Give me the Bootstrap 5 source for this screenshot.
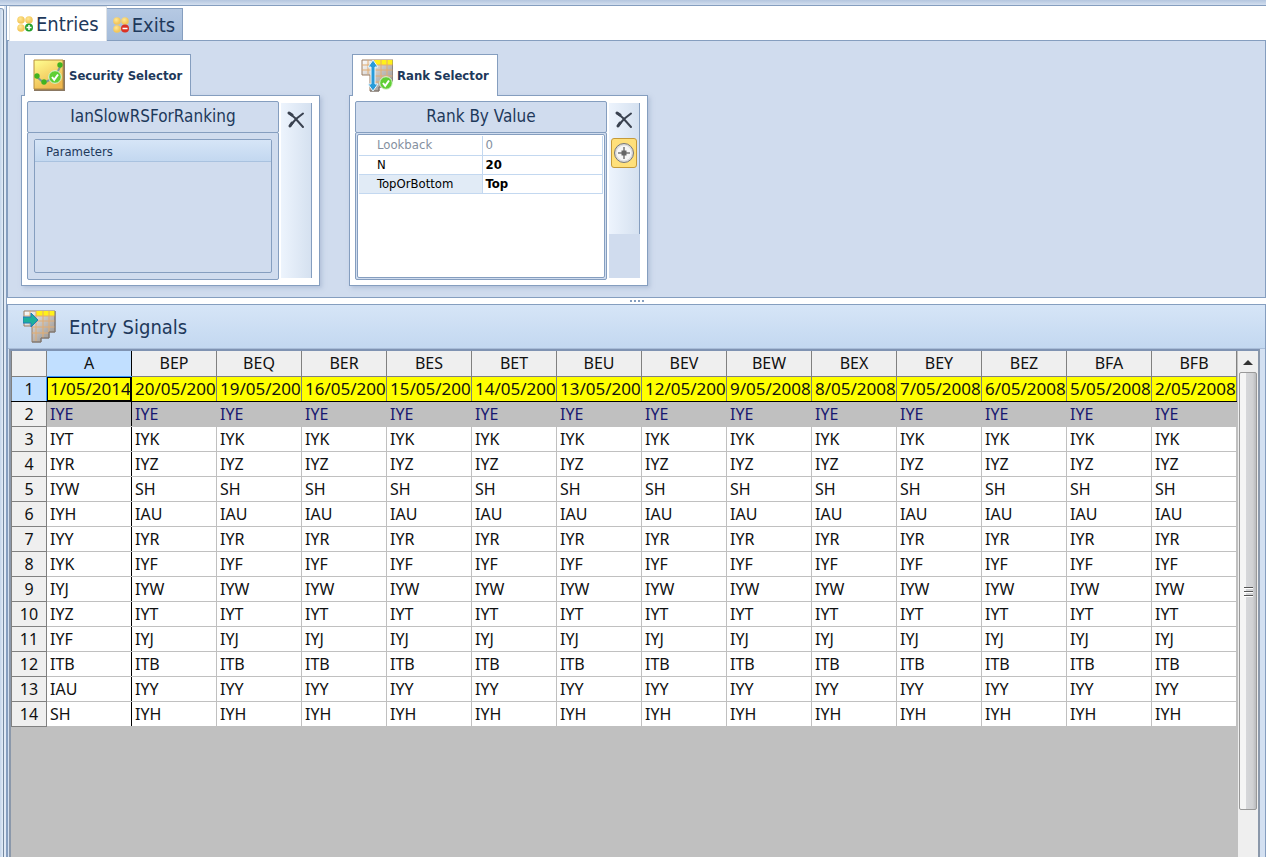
<!DOCTYPE html>
<html lang="en">
<head>
<meta charset="utf-8">
<meta name="viewport" content="width=device-width, initial-scale=1">
<title>Entry Signals</title>
<link href="https://cdn.jsdelivr.net/npm/bootstrap@5.3.0/dist/css/bootstrap.min.css" rel="stylesheet">
<style>
:root{--line:#859ebf;--panel:#d0dcee;--ink:#1e395b}
body{font-family:"DejaVu Sans Condensed","DejaVu Sans",sans-serif;font-stretch:condensed;color:var(--ink);font-size:13px;line-height:16px}
.top-strip{height:6px;background:linear-gradient(#b4c6df,#d3dfef);border-bottom:1px solid var(--line)}
.side-strip{width:4px;margin-top:2px;background:linear-gradient(90deg,#c3d4e9,#e3edf8);border-top:1px solid var(--line);border-right:1px solid #74889f;border-top-right-radius:3px}
.side-gap{width:3px;background:#e0e9f5;border-right:1px solid var(--line)}
.mode-tabs{height:34px;padding-left:2px;border-bottom:0}
.mode-tabs .nav-link{font-size:20px;line-height:24px;color:var(--ink);border:1px solid var(--line);border-bottom:0;border-radius:0;margin:0;padding:0 7px;gap:2px}
.mode-tabs .nav-link.active{background:#fff;height:35px;color:var(--ink);position:relative;z-index:1;margin-bottom:-1px}
.mode-tabs .exits-tab{background:linear-gradient(#b5c9e3,#a5bcda);height:32px;border-left:0;padding:0 7px 0 6px}
.selectors{background:var(--panel);border:1px solid var(--line);height:258px;padding:13px 13px 0}
.sel-block{width:299px;margin-right:29px}
.sel-tab{height:42px;margin-left:3px;padding:0 8px;background:#fff;border:1px solid var(--line);border-bottom:0;font-size:13px;font-weight:bold;position:relative;z-index:1;margin-bottom:-1px}
.sel-box{height:191px;background:#fff;border:1px solid var(--line);box-shadow:2px 2px 4px #93a6c480;padding:5px 7px 5px 5px}
.frame-line{border:1px solid var(--line);border-radius:2px}
.rule-col{width:252px}
.rule-title{height:32px;background:var(--panel);font-size:17px;line-height:29px}
.rule-body{background:var(--panel);padding:6px;margin-top:-1px}
.group-title{height:22px;background:linear-gradient(#d6e5f7,#c3d8f0);border-bottom:1px solid #a9c2df;padding:0 11px;line-height:23px}
.tool-col{width:31px;margin:2px 0;background:var(--panel)}
.tool-rail{background:linear-gradient(90deg,#edf4fd,#d5e1f0);border-right:1px solid var(--line);padding:5px 2px}
.tool-btn{width:26px;height:24px;line-height:0;background:none;border:0}
.target-btn{height:30px;background:#ffe07a;border:1px solid #c59a3a;border-radius:3px;margin-top:6px}
.props{background:#fff;padding:1px;margin:1px}
.prop-table{border-collapse:collapse;table-layout:fixed;width:100%;color:#000;line-height:16px}
.prop-table td,.prop-table th{border:1px solid #c3d8f0;height:19px;padding:0 3px;font-weight:400;border-top:0}
.prop-table th{padding-left:18px;width:123px;border-left:0}
.prop-table td{font-weight:bold}
.prop-table .dim>*{color:#8490a0;font-weight:400}
.prop-table .chosen th{background:#e1ebf6}
.splitter{height:6px;background:#fff;gap:2px}
.grip{width:2px;height:2px;background:var(--line)}
.signals{border:1px solid var(--line);border-bottom:0;background:#d3e0f1}
.signals-title{height:44px;font-size:20px;line-height:24px;background:linear-gradient(#d6e5f7,#c3d8f0);border-bottom:1px solid #a9bdd8;padding-left:15px}
.sheet-frame{margin:0 5px 0 1px;border:2px solid #8b98aa;border-top-color:#7f93b2;border-bottom:0;background:silver}
.sheet{table-layout:fixed;width:1226px;border-collapse:collapse;font-family:"Noto Sans","Open Sans",sans-serif;font-stretch:normal;font-size:16px;line-height:20px;color:#111}
.sheet th,.sheet td{height:25px;padding:0 0 0 3px;border:1px solid silver;border-top:0;overflow:hidden;white-space:nowrap;font-weight:400}
.sheet td{background:#fff}
.sheet th{background:#efefef;border-color:gray;text-align:center;padding:0}
.sheet .dates td{background:#ff0;border-color:gray;border-bottom-color:#000;font-size:17px}
.sheet .dates th{border-bottom-color:#000}
.sheet .sector td{background:silver;color:#191970}
.sheet tr>*:nth-child(2){border-right-color:#000}
.sheet tr>td:nth-child(3){border-left-color:#000}
.sheet .pick{background:#c1dfff;border-right-color:#3399ff;border-bottom-color:#3399ff}
.sheet .dates .cursor-cell{border-color:#000;box-shadow:inset 0 0 0 1px #000}
.bar{width:20px;background:#efefef;padding:0 1px}
.bar button{height:21px;line-height:0;background:none;border:0}
.thumb{height:438px;border:1px solid #999;border-radius:2px;background:linear-gradient(90deg,#f5f5f5 35%,#d6d7da 40%,#d0d1d3 80%,#b9babd)}
</style>
<script src="https://cdn.jsdelivr.net/npm/bootstrap@5.3.0/dist/js/bootstrap.bundle.min.js"></script>
</head>
<body class="vh-100 d-flex flex-column overflow-hidden">
<svg width="0" height="0" class="position-absolute" aria-hidden="true">
  <defs>
    <radialGradient id="gold" cx=".4" cy=".35"><stop offset="0" stop-color="#ffe894"/><stop offset="1" stop-color="#f3c75c"/></radialGradient>
    <linearGradient id="tile" x2=".5" y2="1"><stop offset="0" stop-color="#ffff91"/><stop offset="1" stop-color="#efb84f"/></linearGradient>
    <linearGradient id="steel" x2="1" y2="1"><stop offset="0" stop-color="#fff"/><stop offset=".5" stop-color="#c4c0bd"/><stop offset="1" stop-color="#8f8b88"/></linearGradient>
    <g id="coins" fill="url(#gold)"><circle cx="4" cy="4" r="3.800"/><circle cx="12" cy="4" r="3.800"/><circle cx="4" cy="12" r="3.800"/></g>
    <g id="tick"><circle cx="0" cy="0" r="6.300" fill="#60cf35" stroke="#dff5d5"/><path d="M-3 0l2.200 2.800L3-2.500" fill="none" stroke="#fff" stroke-width="2"/></g>
    <g id="sheet-icon"><path d="M1 1h31v21h-6v6h-8v4H9v-16H1z" fill="url(#steel)" stroke="#9b7d62"/><path d="M13 1h19v5H13z" fill="#fff11a"/><path d="M1 6h31M1 11h31M9 17h23M9 23h17M7 1v14M13 1v30M20 1v27M26 1v21" fill="none" stroke="#e2ac70"/><path d="M32 1v21h-6v6h-8v4H9" fill="none" stroke="#777"/></g>
    <g id="cross" fill="none" stroke="#3a4250" stroke-linecap="round"><path d="M2 2l6 5 8 9" stroke-width="2"/><path d="M16 2.500L9 8 3 15" stroke-width="2"/><path d="M2 2l3 2M3 15l2-3" stroke-width="3"/></g>
  </defs>
</svg>

<div class="top-strip flex-shrink-0"></div>
<div class="d-flex flex-grow-1 overflow-hidden">
  <div class="side-strip flex-shrink-0"></div>
  <div class="side-gap flex-shrink-0"></div>
  <main class="d-flex flex-column flex-grow-1 overflow-hidden">
    <nav class="nav nav-tabs mode-tabs align-items-end flex-shrink-0">
      <a class="nav-link active d-flex align-items-center" href="#entries"><svg width="17" height="16"><use href="#coins"/><circle cx="12" cy="11.500" r="4" fill="#24a12b"/><path d="M12 9v5M9.500 11.500h5" stroke="#fff" stroke-width="1.500"/></svg>Entries</a>
      <a class="nav-link exits-tab d-flex align-items-center" href="#exits"><svg width="17" height="16"><use href="#coins"/><circle cx="12" cy="11.500" r="4" fill="#dc3124"/><path d="M9.500 11.500h5" stroke="#fff" stroke-width="1.500"/></svg>Exits</a>
    </nav>

    <section class="selectors d-flex flex-shrink-0" id="entries">
      <div class="sel-block d-flex flex-column flex-shrink-0">
        <div class="sel-tab d-flex align-items-center align-self-start gap-1">
          <svg width="32" height="33"><path d="M1 1h31v31H1z" fill="#8b7862"/><path d="M1 1h29v29H1z" fill="url(#tile)" stroke="#b78d3d"/><path d="M4 18l7 6 11-6 6-12" fill="none" stroke="#7e9999" stroke-width="2"/><g fill="#42b321"><circle cx="4" cy="17" r="2.700"/><circle cx="11" cy="23" r="2.700"/><circle cx="27" cy="6" r="2.700"/></g><use href="#tick" x="22" y="18"/></svg>
          Security Selector
        </div>
        <div class="sel-box d-flex justify-content-between">
          <div class="rule-col d-flex flex-column">
            <div class="rule-title frame-line text-center">IanSlowRSForRanking</div>
            <div class="rule-body frame-line flex-grow-1 d-flex">
              <div class="frame-line flex-grow-1"><div class="group-title">Parameters</div></div>
            </div>
          </div>
          <div class="tool-col d-flex flex-column">
            <div class="tool-rail flex-grow-1"><button class="tool-btn p-0" aria-label="Remove"><svg width="18" height="18"><use href="#cross"/></svg></button></div>
          </div>
        </div>
      </div>

      <div class="sel-block d-flex flex-column flex-shrink-0">
        <div class="sel-tab d-flex align-items-center align-self-start gap-1">
          <svg width="32" height="34"><use href="#sheet-icon"/><path d="M12 1l5 7h-3v17h3l-5 7-5-7h3V8H7z" fill="#279bd9" stroke="#e9f5fc"/><use href="#tick" x="25" y="24"/></svg>
          Rank Selector
        </div>
        <div class="sel-box d-flex justify-content-between">
          <div class="rule-col d-flex flex-column">
            <div class="rule-title frame-line text-center">Rank By Value</div>
            <div class="rule-body frame-line flex-grow-1 d-flex p-0">
              <div class="props frame-line flex-grow-1">
                <table class="prop-table">
                  <tr class="dim"><th scope="row">Lookback</th><td>0</td></tr>
                  <tr><th scope="row">N</th><td>20</td></tr>
                  <tr class="chosen"><th scope="row">TopOrBottom</th><td>Top</td></tr>
                </table>
              </div>
            </div>
          </div>
          <div class="tool-col d-flex flex-column">
            <div class="tool-rail h-75"><button class="tool-btn p-0" aria-label="Remove"><svg width="18" height="18"><use href="#cross"/></svg></button><button class="tool-btn target-btn p-0" aria-label="Locate"><svg width="22" height="22"><circle cx="11" cy="11" r="9.500" fill="#dcdcdc" stroke="#777"/><circle cx="11" cy="11" r="7.500" fill="#f7f7f7"/><path d="M11 5v12M5 11h12" stroke="#999" stroke-width="2"/><path d="M8.500 8.500h5v5h-5z" fill="#666"/></svg></button></div>
          </div>
        </div>
      </div>
    </section>

    <div class="splitter d-flex justify-content-center align-items-center flex-shrink-0"><i class="grip"></i><i class="grip"></i><i class="grip"></i><i class="grip"></i></div>

    <section class="signals d-flex flex-column flex-grow-1 overflow-hidden">
      <div class="signals-title d-flex align-items-center flex-shrink-0">
        <svg class="me-2" width="38" height="34"><use href="#sheet-icon"/><path d="M0 7h8V3l7 7-7 7v-4H0z" fill="#1eb09b" stroke="#2178bd"/></svg>
        <span>Entry Signals</span>
      </div>
      <div class="sheet-frame d-flex flex-grow-1 overflow-hidden">
        <div class="flex-grow-1 overflow-hidden"><table class="sheet" id="sheet"></table></div>
        <div class="bar flex-shrink-0 d-flex flex-column">
          <button class="p-0" aria-label="Scroll up"><svg width="10" height="6"><path d="M0 6l5-5 5 5z" fill="#333"/></svg></button>
          <div class="thumb d-flex align-items-center justify-content-center"><svg width="9" height="11"><path d="M0 1.500h9M0 5.500h9M0 9.500h9" stroke="#555"/><path d="M0 2.500h9M0 6.500h9M0 10.500h9" stroke="#fff"/></svg></div>
        </div>
      </div>
    </section>
  </main>
</div>
<script>
const cols = ["A","BEP","BEQ","BER","BES","BET","BEU","BEV","BEW","BEX","BEY","BEZ","BFA","BFB"];
const dates = ["1/05/2014","20/05/200","19/05/200","16/05/200","15/05/200","14/05/200","13/05/200","12/05/200","9/05/2008","8/05/2008","7/05/2008","6/05/2008","5/05/2008","2/05/2008"];
const first = ["IYE","IYT","IYR","IYW","IYH","IYY","IYK","IYJ","IYZ","IYF","ITB","IAU","SH"];
const other = ["IYE","IYK","IYZ","SH","IAU","IYR","IYF","IYW","IYT","IYJ","ITB","IYY","IYH"];
let html = '<colgroup><col style="width:35px"></colgroup><tr><th></th>' + cols.map((c, i) => `<th scope="col"${i ? "" : ' class="pick"'}>${c}</th>`).join("") + "</tr>";
html += '<tr class="dates"><th scope="row" class="pick">1</th>' + dates.map((d, i) => `<td${i ? "" : ' class="cursor-cell"'}>${d}</td>`).join("") + "</tr>";
first.forEach((f, r) => {
  html += `<tr${r ? "" : ' class="sector"'}><th scope="row">${r + 2}</th>` + cols.map((c, i) => `<td>${i ? other[r] : f}</td>`).join("") + "</tr>";
});
document.getElementById("sheet").innerHTML = html;
</script>
</body>
</html>
